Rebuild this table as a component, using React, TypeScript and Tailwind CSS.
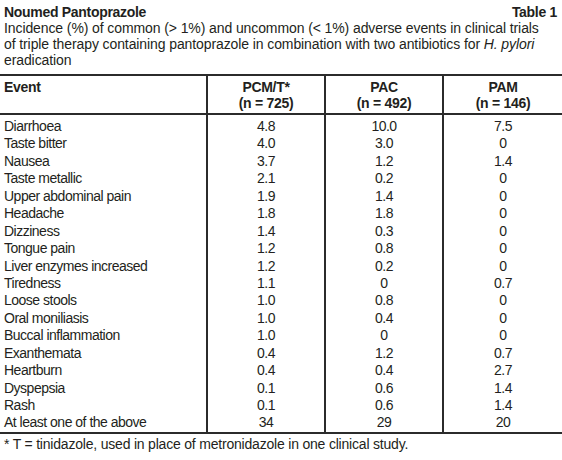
const rows: [string, string, string, string][] = [
  ["Diarrhoea", "4.8", "10.0", "7.5"],
  ["Taste bitter", "4.0", "3.0", "0"],
  ["Nausea", "3.7", "1.2", "1.4"],
  ["Taste metallic", "2.1", "0.2", "0"],
  ["Upper abdominal pain", "1.9", "1.4", "0"],
  ["Headache", "1.8", "1.8", "0"],
  ["Dizziness", "1.4", "0.3", "0"],
  ["Tongue pain", "1.2", "0.8", "0"],
  ["Liver enzymes increased", "1.2", "0.2", "0"],
  ["Tiredness", "1.1", "0", "0.7"],
  ["Loose stools", "1.0", "0.8", "0"],
  ["Oral moniliasis", "1.0", "0.4", "0"],
  ["Buccal inflammation", "1.0", "0", "0"],
  ["Exanthemata", "0.4", "1.2", "0.7"],
  ["Heartburn", "0.4", "0.4", "2.7"],
  ["Dyspepsia", "0.1", "0.6", "1.4"],
  ["Rash", "0.1", "0.6", "1.4"],
  ["At least one of the above", "34", "29", "20"],
]

const headers = [
  { name: "PCM/T*", n: "(n = 725)" },
  { name: "PAC", n: "(n = 492)" },
  { name: "PAM", n: "(n = 146)" },
]

const App = () => {
  return (
    <div className="w-[562px] h-[460px] bg-white text-[#231f20] font-['Liberation_Sans',Arial,sans-serif] text-[14px] leading-[16px]">
      <div className="flex items-end justify-between pl-[4px] pr-[5px] pt-[4px] font-bold tracking-[-0.3px]">
        <span>Noumed Pantoprazole</span>
        <span>Table 1</span>
      </div>
      <p className="px-[4px] whitespace-nowrap tracking-[-0.1px]">
        Incidence (%) of common (&gt; 1%) and uncommon (&lt; 1%) adverse events in clinical trials
        <br />
        of triple therapy containing pantoprazole in combination with two antibiotics for{" "}
        <i>H. pylori</i>
        <br />
        eradication
      </p>
      <table className="mt-[6px] w-full border-collapse table-fixed">
        <colgroup>
          <col className="w-[207px]" />
          <col className="w-[118px]" />
          <col className="w-[118px]" />
          <col className="w-[119px]" />
        </colgroup>
        <thead>
          <tr className="border-y-2 border-[#2b2b2b]">
            <th className="text-left align-top font-bold px-[4px] pt-[3px] pb-[2px] leading-[16px] tracking-[-0.3px]">
              Event
            </th>
            {headers.map((h) => (
              <th
                key={h.name}
                className="text-center align-top font-bold pt-[3px] pb-[2px] leading-[16px] tracking-[-0.3px] border-l-2 border-[#2b2b2b]"
              >
                {h.name}
                <br />
                {h.n}
              </th>
            ))}
          </tr>
        </thead>
        <tbody className="border-b-2 border-[#2b2b2b] tracking-[-0.5px]">
          {rows.map((r, idx) => (
            <tr key={r[0]}>
              <td
                className={
                  "px-[4px] leading-[17.43px] whitespace-nowrap" + (idx === 0 ? " pt-[3px]" : "")
                }
              >
                {r[0]}
              </td>
              {r.slice(1).map((v, i) => (
                <td
                  key={i}
                  className={
                    "text-center leading-[17.43px] border-l-2 border-[#2b2b2b]" +
                    (idx === 0 ? " pt-[3px]" : "")
                  }
                >
                  {v}
                </td>
              ))}
            </tr>
          ))}
        </tbody>
      </table>
      <p className="px-[4px] pt-[2px] whitespace-nowrap tracking-[-0.2px]">
        * T = tinidazole, used in place of metronidazole in one clinical study.
      </p>
    </div>
  )
}

export default App
